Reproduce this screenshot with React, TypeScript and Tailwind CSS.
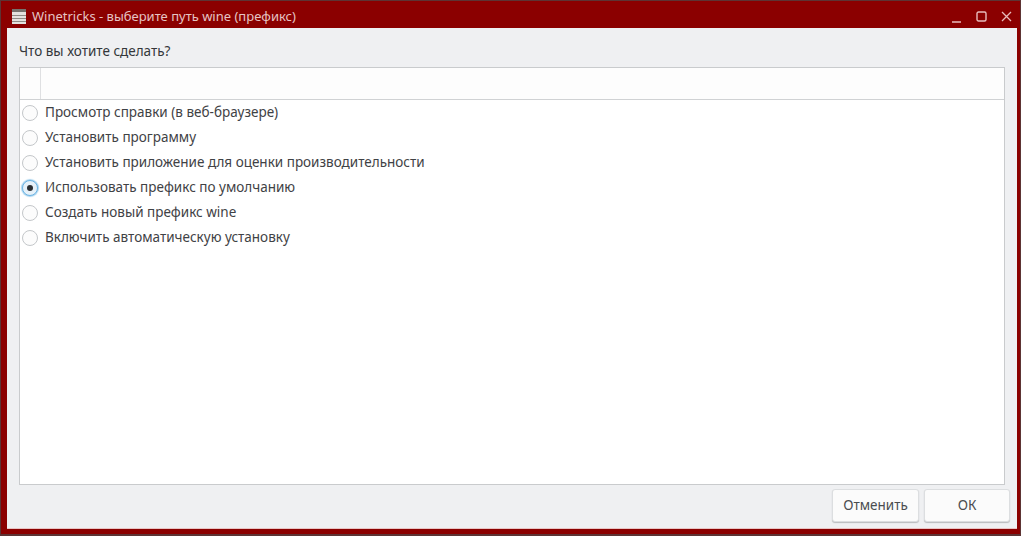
const OPTIONS = [
  "Просмотр справки (в веб-браузере)",
  "Установить программу",
  "Установить приложение для оценки производительности",
  "Использовать префикс по умолчанию",
  "Создать новый префикс wine",
  "Включить автоматическую установку",
];
const SELECTED = 3;

function Radio({ checked }: { checked: boolean }) {
  if (checked) {
    return (
      <span className="flex items-center justify-center w-[16px] h-[16px] rounded-full border border-[#6cb4e4] bg-[#e6f1f9] shadow-[0_0_1px_1px_#a9d3ee]">
        <span className="w-[6px] h-[6px] rounded-full bg-[#2b2f33]" />
      </span>
    );
  }
  return <span className="w-[16px] h-[16px] rounded-full border border-[#c4c7ca] bg-[#fcfcfc]" />;
}

function Button({ label, width }: { label: string; width: string }) {
  return (
    <button className={`h-[33px] ${width} rounded-[3px] border border-[#dcdee0] bg-[#fbfbfb] text-[13.5px] text-[#4a4d50] shadow-[0_1px_1px_#b9bbbd]`}>
      {label}
    </button>
  );
}

export default function App() {
  return (
    <div className="w-[1021px] h-[536px] overflow-hidden flex flex-col bg-[#8b0000] border border-b-2 border-[#5d3434] font-['Noto_Sans',sans-serif]">
      <div className="h-[27px] shrink-0 flex items-center pt-[4px] pl-[11px] pr-[8px] text-[13px] text-[#e6c4c4]">
        <svg width="14" height="15" viewBox="0 0 14 15" className="mr-[6px]">
          <rect width="14" height="15" fill="#e4e2df" />
          <rect width="14" height="3" fill="#77736e" />
          <path d="M0 6.5h14M0 9.5h14M0 12.5h14" stroke="#8f8b86" strokeWidth="1" />
        </svg>
        <span>Winetricks - выберите путь wine (префикс)</span>
        <div className="ml-auto flex items-center gap-[14px] text-[#e8bcbc]">
          <svg width="11" height="12" viewBox="0 0 11 12">
            <path d="M1 11h9" stroke="currentColor" strokeWidth="1.5" />
          </svg>
          <svg width="11" height="11" viewBox="0 0 11 11">
            <rect x="1" y="1" width="9" height="9" rx="1.5" fill="none" stroke="currentColor" strokeWidth="1.4" />
          </svg>
          <svg width="11" height="11" viewBox="0 0 11 11">
            <path d="M1 1l9 9M10 1l-9 9" stroke="currentColor" strokeWidth="1.3" />
          </svg>
        </div>
      </div>

      <div className="flex-1 flex flex-col ml-[6px] mr-[3px] mb-[5px] border-b border-[#e8c4c4] bg-[#eff0f2] pl-[12px] pr-[12px]">
        <p className="mt-[13px] h-[20px] leading-[20px] text-[13.5px] text-[#34373a]">Что вы хотите сделать?</p>
        <div className="mt-[6px] flex-1 flex flex-col border border-[#c9cbcd] bg-white">
          <div className="h-[32px] shrink-0 flex border-b border-[#d0d2d4] bg-[#fdfdfd]">
            <div className="w-[21px] border-r border-[#dfe0e2]" />
          </div>
          <div>
            {OPTIONS.map((label, i) => (
              <div key={label} className="h-[25px] flex items-center pl-[2px] gap-[7px] text-[13.5px] text-[#3f4245]">
                <Radio checked={i === SELECTED} />
                <span>{label}</span>
              </div>
            ))}
          </div>
        </div>
        <div className="h-[43px] shrink-0 flex items-start pt-[4px] justify-end gap-[5px] -mr-[5px]">
          <Button label="Отменить" width="w-[87px]" />
          <Button label="ОК" width="w-[86px]" />
        </div>
      </div>
    </div>
  );
}
